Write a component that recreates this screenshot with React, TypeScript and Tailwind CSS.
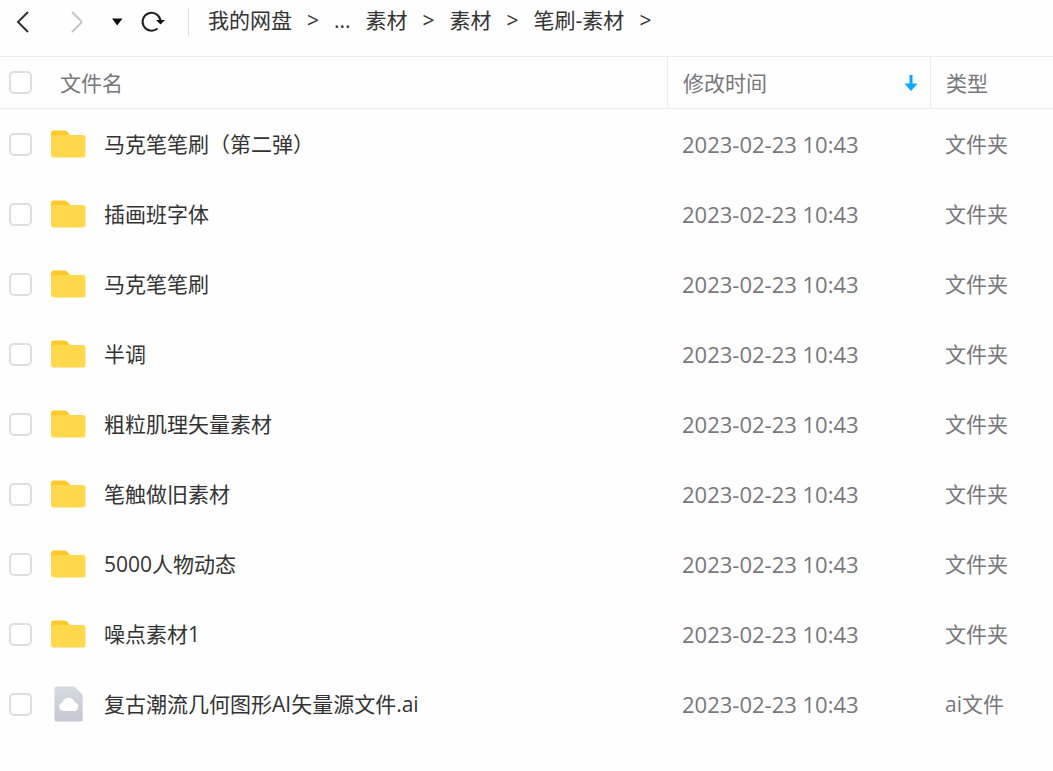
import { useState } from 'react';

interface FileItem {
    name: string;
    modified: string;
    type: string;
    isFolder: boolean;
}

const folder = (name: string): FileItem => ({
    name,
    modified: '2023-02-23 10:43',
    type: '文件夹',
    isFolder: true,
});

const files: FileItem[] = [
    folder('马克笔笔刷（第二弹）'),
    folder('插画班字体'),
    folder('马克笔笔刷'),
    folder('半调'),
    folder('粗粒肌理矢量素材'),
    folder('笔触做旧素材'),
    folder('5000人物动态'),
    folder('噪点素材1'),
    {
        name: '复古潮流几何图形AI矢量源文件.ai',
        modified: '2023-02-23 10:43',
        type: 'ai文件',
        isFolder: false,
    },
];

const crumbs = ['素材', '素材', '笔刷-素材'];

const FolderIcon = () => (
    <svg width="36" height="28" viewBox="0 0 36 28" className="shrink-0" aria-hidden="true">
        <path d="M1 12V3.500A3 3 0 0 1 4 .5h10c1.500 0 2.300.4 3.300 1.300L21 6v6z" fill="#ffc82c" />
        <path
            d="M1 8c0-1.800 1.200-3 3-3h28.500a3 3 0 0 1 3 3v16.500a3 3 0 0 1-3 3H4a3 3 0 0 1-3-3z"
            fill="#ffd84c"
        />
    </svg>
);

const CloudFileIcon = () => (
    <svg width="36" height="36" viewBox="0 0 36 36" className="shrink-0" aria-hidden="true">
        <defs>
            <linearGradient id="file-body" x1="0" y1="0" x2="0" y2="1">
                <stop offset="0" stopColor="#d5dae0" />
                <stop offset="1" stopColor="#c6c8d1" />
            </linearGradient>
        </defs>
        <path
            d="M6.500.5h17c1 0 1.600.3 2.200 1l6 6.500c.6.700 1 1.200 1 2.200v23.300a2 2 0 0 1-2 2H6.500a2 2 0 0 1-2-2v-31a2 2 0 0 1 2-2z"
            fill="url(#file-body)"
        />
        <path
            d="M13.500 25a4.300 4.300 0 0 1-.8-8.500 6.200 6.200 0 0 1 12 0A4.300 4.300 0 0 1 24 25z"
            fill="#fff"
        />
    </svg>
);

interface CheckboxProps {
    label: string;
    checked: boolean;
    onChange: () => void;
}

const Checkbox = ({ label, checked, onChange }: CheckboxProps) => (
    <input
        type="checkbox"
        aria-label={label}
        checked={checked}
        onChange={onChange}
        className="size-[23px] shrink-0 appearance-none rounded-[5px] border-2 border-[#dedede] bg-white checked:border-[#06a7ff] checked:bg-[#06a7ff]"
    />
);

const Toolbar = () => (
    <header className="flex h-14 items-start pl-[7px]">
        <div className="flex h-[43px] items-center">
            <button type="button" aria-label="后退" className="flex w-8 justify-center">
                <svg width="14" height="24" viewBox="0 0 14 24" fill="none" stroke="#333" strokeWidth="2">
                    <path d="M12 2 2 12l10 10" />
                </svg>
            </button>
            <button type="button" aria-label="前进" className="ml-5 flex w-8 justify-center">
                <svg width="14" height="24" viewBox="0 0 14 24" fill="none" stroke="#c4c4c4" strokeWidth="2">
                    <path d="m4 2 10 10L4 22" />
                </svg>
            </button>
            <button type="button" aria-label="历史记录" className="ml-5 flex">
                <svg width="12" height="8" viewBox="0 0 12 8" fill="#111">
                    <path d="M1 .5h10.500L6.200 7.500z" />
                </svg>
            </button>
            <button type="button" aria-label="刷新" className="ml-4 flex">
                <svg width="26" height="24" viewBox="0 0 26 24" fill="none">
                    <path d="M18.500 18.500A9 9 0 1 1 21.500 10.500" stroke="#222" strokeWidth="2" />
                    <path d="M17 10h9l-4.500 4.500z" fill="#111" />
                </svg>
            </button>
            <span className="ml-[23px] h-7 w-px bg-[#dcdcdc]" />
        </div>
        <nav className="ml-[19px] flex h-10 items-center gap-[15px] whitespace-nowrap text-[#333]">
            <a href="#root">我的网盘</a>
            <span>&gt;</span>
            <a href="#more">...</a>
            {crumbs.map((crumb, index) => (
                <span key={index} className="flex gap-[15px]">
                    <a href={`#${index}`}>{crumb}</a>
                    <span>&gt;</span>
                </span>
            ))}
        </nav>
    </header>
);

export default function App() {
    const [selected, setSelected] = useState<number[]>([]);

    const allSelected = selected.length === files.length;

    const toggle = (index: number) => {
        setSelected(
            selected.includes(index) ? selected.filter((i) => i !== index) : [...selected, index]
        );
    };

    return (
        <div className="min-h-screen bg-[#fefefe] font-['Open_Sans','Noto_Sans_CJK_SC',sans-serif] text-[21px] leading-7">
            <Toolbar />
            <table className="w-full table-fixed border-separate border-spacing-0 text-left">
                <colgroup>
                    <col />
                    <col className="w-[263px]" />
                    <col className="w-[123px]" />
                </colgroup>
                <thead className="text-[#77777c]">
                    <tr className="h-[53px]">
                        <th className="border-y border-[#ececec] p-0 pl-[9px] font-normal">
                            <div className="flex items-center">
                                <Checkbox
                                    label="全选"
                                    checked={allSelected}
                                    onChange={() => setSelected(allSelected ? [] : files.map((_, i) => i))}
                                />
                                <span className="ml-7">文件名</span>
                            </div>
                        </th>
                        <th className="border-y border-l border-[#ececec] p-0 pr-3 pl-[15px] font-normal">
                            <button type="button" className="flex w-full items-center justify-between">
                                修改时间
                                <svg width="14" height="18" viewBox="0 0 14 18" aria-hidden="true">
                                    <path d="M5.500 1h3v8.500h5L7 17 .5 9.500h5z" fill="#06a7ff" />
                                </svg>
                            </button>
                        </th>
                        <th className="border-y border-l border-[#ececec] p-0 pl-[15px] font-normal">类型</th>
                    </tr>
                </thead>
                <tbody className="text-[#77777c]">
                    {files.map((file, index) => (
                        <tr key={file.name} className="h-[70px]">
                            <td className="p-0 pl-[9px]">
                                <div className="flex items-center">
                                    <Checkbox
                                        label={file.name}
                                        checked={selected.includes(index)}
                                        onChange={() => toggle(index)}
                                    />
                                    <span className="mx-[18px]">
                                        {file.isFolder ? <FolderIcon /> : <CloudFileIcon />}
                                    </span>
                                    <span className="truncate text-[#333]">{file.name}</span>
                                </div>
                            </td>
                            <td className="p-0 pl-[15px] text-[22px]">{file.modified}</td>
                            <td className="p-0 pl-[15px]">{file.type}</td>
                        </tr>
                    ))}
                </tbody>
            </table>
        </div>
    );
}
